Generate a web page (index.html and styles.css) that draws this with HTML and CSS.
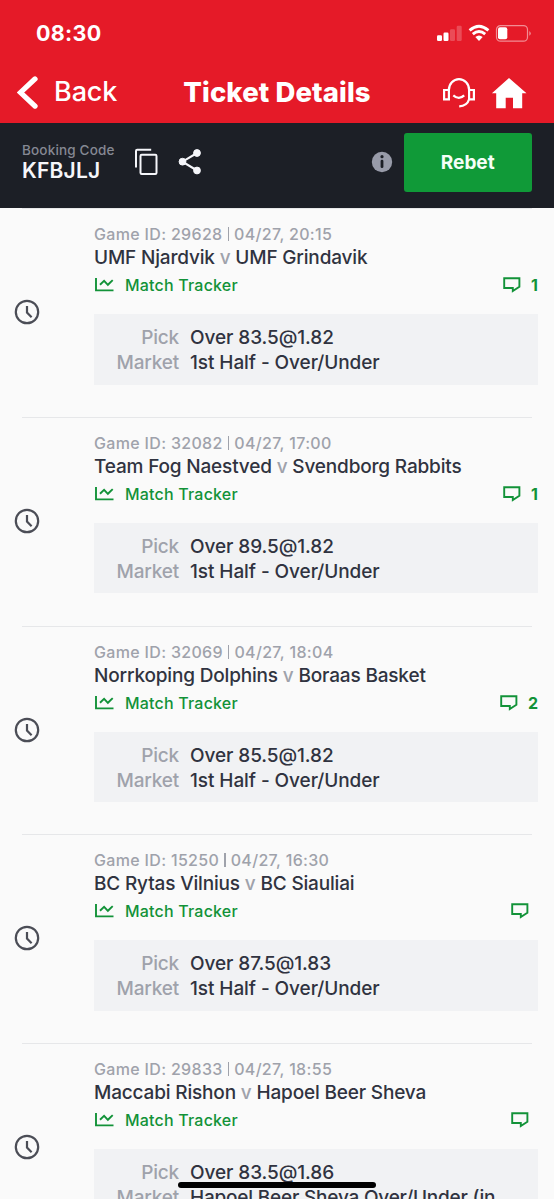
FILE: index.html
```
<!DOCTYPE html>
<html lang="en">
<head>
<meta charset="utf-8">
<title>Ticket Details</title>
<link rel="stylesheet" href="styles.css">
</head>
<body>
<svg class="defs" width="0" height="0">
  <symbol id="clock" viewBox="0 0 26 26"><circle cx="13" cy="13" r="11.2"/><path d="M13 7v6.6l4.6 4.6"/></symbol>
  <symbol id="chart" viewBox="0 0 20 16"><path d="M2 1v12.4h17.5M6 7.7l4.1-3.9 3.8 4 4.8-4.7"/></symbol>
  <symbol id="chat" viewBox="0 0 18 16" preserveAspectRatio="none"><path d="M1.2 1.2h15.2v8.6l-6.6 4.3v-3.1H1.2z"/></symbol>
</svg>
<div class="phone">
  <header class="top">
    <div class="status">
      <span class="time">08:30</span>
      <svg class="system" width="96" height="20" viewBox="0 0 96 20">
        <g fill="#fff"><rect x="1" y="12.2" width="5" height="5.8" rx="1.2"/><rect x="7.5" y="9.5" width="5" height="8.5" rx="1.2"/><g opacity=".22"><rect x="14" y="6.2" width="5" height="11.8" rx="1.2"/><rect x="20.7" y="2.8" width="5" height="15.2" rx="1.2"/></g></g>
        <path d="M33.6 7.4q9.4-8.2 18.8 0M36.8 11.2q6.2-5.2 12.4 0" fill="none" stroke="#fff" stroke-width="2.9"/>
        <path d="M39.3 14q3.7-3 7.4 0L43 18z" fill="#fff"/>
        <rect x="60.5" y="2.6" width="31" height="15.6" rx="4" fill="none" stroke="#fff" stroke-opacity=".5" stroke-width="1.2"/>
        <rect x="62" y="4.3" width="9.3" height="12" rx="2" fill="#fff"/><path d="M93.3 8v4.8q3-2.4 0-4.8" fill="#fff" opacity=".5"/>
      </svg>
    </div>
    <nav class="nav">
      <div class="back">
        <svg width="22" height="36" viewBox="0 0 22 36"><path d="M18 3.5L3.5 17.5 18 31.5" fill="none" stroke="#fff" stroke-width="5.3" stroke-linecap="round" stroke-linejoin="miter"/></svg>
        <span>Back</span>
      </div>
      <h1>Ticket Details</h1>
      <div class="actions">
        <svg width="34" height="32" viewBox="0 0 34 32" fill="none" stroke="#fff" stroke-width="2.2"><path d="M2.1 13h4.8v9.3H2.1zM27.1 13h4.8v9.3h-4.8zM6.9 13a10.1 10.8 0 0 1 20.2 0v9.3q-2 6.8-9.9 7.1M11.3 18.4Q17 23.4 22.2 18.4"/></svg>
        <svg width="36" height="32" viewBox="0 0 36 32" fill="#fff"><path d="M18 .9L35.5 16.2h-4.3v15H22V20.7h-7.3v10.5H5.2v-15H.9z"/></svg>
      </div>
    </nav>
  </header>
  <section class="booking">
    <div class="code"><span class="code-label">Booking Code</span><strong>KFBJLJ</strong></div>
    <svg class="copy" width="24" height="28" viewBox="0 0 24 28" fill="none" stroke="#f5f6fa" stroke-width="2"><path d="M2 19.5V3q0-1.2 1.2-1.2h14"/><rect x="6.5" y="6.7" width="16" height="19.2" rx="1.2"/></svg>
    <svg class="share" width="24" height="28" viewBox="0 0 24 28" fill="#f5f6fa" stroke="#f5f6fa"><path d="M19 5L4.5 13.7 19 22.5" fill="none" stroke-width="2.1"/><circle cx="19" cy="5" r="3.4"/><circle cx="4.5" cy="13.7" r="3.4"/><circle cx="19" cy="22.5" r="3.4"/></svg>
    <svg class="info" width="22" height="22" viewBox="0 0 22 22"><circle cx="11" cy="11" r="10.2" fill="#989ba9"/><circle cx="11" cy="5.7" r="1.6" fill="#1c1f26"/><rect x="9.6" y="8.8" width="2.8" height="8.3" rx="1.3" fill="#1c1f26"/></svg>
    <button class="rebet">Rebet</button>
  </section>
  <main class="games">
    <article class="game">
      <svg class="clock"><use href="#clock"/></svg>
      <div class="detail">
        <p class="meta"><span>Game ID: 29628</span><i></i><span>04/27, 20:15</span></p>
        <h2>UMF Njardvik <em>v</em> UMF Grindavik</h2>
        <div class="tracker"><svg class="chart"><use href="#chart"/></svg><span>Match Tracker</span><div class="comments"><svg class="chat"><use href="#chat"/></svg><b>1</b></div></div>
        <dl class="bet"><dt>Pick</dt><dd>Over 83.5@1.82</dd><dt>Market</dt><dd>1st Half - Over/Under</dd></dl>
      </div>
    </article>
    <article class="game">
      <svg class="clock"><use href="#clock"/></svg>
      <div class="detail">
        <p class="meta"><span>Game ID: 32082</span><i></i><span>04/27, 17:00</span></p>
        <h2>Team Fog Naestved <em>v</em> Svendborg Rabbits</h2>
        <div class="tracker"><svg class="chart"><use href="#chart"/></svg><span>Match Tracker</span><div class="comments"><svg class="chat"><use href="#chat"/></svg><b>1</b></div></div>
        <dl class="bet"><dt>Pick</dt><dd>Over 89.5@1.82</dd><dt>Market</dt><dd>1st Half - Over/Under</dd></dl>
      </div>
    </article>
    <article class="game">
      <svg class="clock"><use href="#clock"/></svg>
      <div class="detail">
        <p class="meta"><span>Game ID: 32069</span><i></i><span>04/27, 18:04</span></p>
        <h2>Norrkoping Dolphins <em>v</em> Boraas Basket</h2>
        <div class="tracker"><svg class="chart"><use href="#chart"/></svg><span>Match Tracker</span><div class="comments"><svg class="chat"><use href="#chat"/></svg><b>2</b></div></div>
        <dl class="bet"><dt>Pick</dt><dd>Over 85.5@1.82</dd><dt>Market</dt><dd>1st Half - Over/Under</dd></dl>
      </div>
    </article>
    <article class="game">
      <svg class="clock"><use href="#clock"/></svg>
      <div class="detail">
        <p class="meta"><span>Game ID: 15250</span><i></i><span>04/27, 16:30</span></p>
        <h2>BC Rytas Vilnius <em>v</em> BC Siauliai</h2>
        <div class="tracker"><svg class="chart"><use href="#chart"/></svg><span>Match Tracker</span><div class="comments empty"><svg class="chat"><use href="#chat"/></svg></div></div>
        <dl class="bet"><dt>Pick</dt><dd>Over 87.5@1.83</dd><dt>Market</dt><dd>1st Half - Over/Under</dd></dl>
      </div>
    </article>
    <article class="game">
      <svg class="clock"><use href="#clock"/></svg>
      <div class="detail">
        <p class="meta"><span>Game ID: 29833</span><i></i><span>04/27, 18:55</span></p>
        <h2>Maccabi Rishon <em>v</em> Hapoel Beer Sheva</h2>
        <div class="tracker"><svg class="chart"><use href="#chart"/></svg><span>Match Tracker</span><div class="comments empty"><svg class="chat"><use href="#chat"/></svg></div></div>
        <dl class="bet"><dt>Pick</dt><dd>Over 83.5@1.86</dd><dt>Market</dt><dd class="long">Hapoel Beer Sheva Over/Under (in</dd></dl>
      </div>
    </article>
  </main>
  <div class="home-bar"></div>
</div>
</body>
</html>
```
FILE: styles.css
```
* { box-sizing: border-box; margin: 0; padding: 0; }
body { font-family: Inter, "Liberation Sans", sans-serif; background: #fafafa; overflow: hidden; }
svg { display: block; flex: none; }
.defs { position: absolute; }
.phone { position: relative; width: 554px; height: 1199px; overflow: hidden; display: flex; flex-direction: column; }
.top { height: 123px; flex: none; background: #e51a28; color: #fff; }
.status { height: 62px; padding: 22px 22px 0 36px; display: flex; justify-content: space-between; }
.time { font-size: 21.5px; line-height: 22px; font-weight: 700; letter-spacing: .3px; }
.system { margin-top: 1px; }
.nav { height: 61px; display: grid; grid-template-columns: 167px 220px 167px; align-items: center; }
.back { display: flex; align-items: center; gap: 15px; padding-left: 17px; font-size: 27px; line-height: 32px; font-weight: 500; letter-spacing: -.1px; }
.back span { padding-bottom: 1px; }
.back svg { transform: scaleY(.97); }
h1 { font-size: 27.5px; line-height: 32px; font-weight: 780; letter-spacing: .1px; text-align: center; white-space: nowrap; padding-bottom: 1px; }
.actions { display: flex; justify-content: flex-end; gap: 15px; padding-right: 27px; }
.booking { height: 85px; flex: none; background: #1c1f26; color: #f5f6fa; display: flex; align-items: center; padding: 0 22px 7px 22px; }
.code { width: 112px; display: flex; flex-direction: column; white-space: nowrap; }
.code-label { color: #858893; font-size: 13.5px; line-height: 17px; font-weight: 500; letter-spacing: .17px; }
.code strong { font-size: 21px; line-height: 24px; font-weight: 600; letter-spacing: .2px; }
.share { margin-left: 20px; }
.info { margin-left: auto; }
.rebet { margin-left: 10.5px; width: 128.5px; height: 59px; border: 0; border-radius: 3px; background: #109a38; color: #f5fff7; font: 650 19px Inter, sans-serif; }
.games { flex: none; }
.game { position: relative; height: 208.75px; padding-right: 16px; display: flex; }
.game::before { content: ""; position: absolute; left: 22px; right: 22px; top: 0; height: 1px; background: #e6e7e9; }
.clock { width: 26px; height: 26px; margin: 91px 54px 0 14px; fill: none; stroke: #4b4d56; stroke-width: 2.2; }
.detail { width: 444px; padding-top: 15px; }
.meta { display: flex; align-items: center; height: 22px; color: #9fa2ab; font-size: 16px; font-weight: 550; letter-spacing: .33px; white-space: nowrap; }
.meta i { width: 1.5px; height: 14px; background: #9fa2ab; margin: 0 5px; }
h2 { height: 26px; line-height: 25px; color: #303340; font-size: 19px; font-weight: 550; letter-spacing: -.17px; white-space: nowrap; }
h2 em { font-style: normal; color: #9fa2ab; }
.tracker { height: 28px; display: flex; align-items: center; color: #129238; font-size: 16px; font-weight: 550; letter-spacing: .2px; }
.chart { width: 20px; height: 16px; margin-right: 11px; fill: none; stroke: #129238; stroke-width: 1.9; }
.comments { margin-left: auto; display: flex; align-items: center; }
.comments.empty { margin-right: 9px; }
.chat { width: 18px; height: 16px; fill: none; stroke: #129238; stroke-width: 1.9; }
.comments b { font-weight: 650; font-size: 16px; letter-spacing: 0; margin-left: 10px; }
.bet { margin-top: 15px; height: 70.5px; background: #f1f2f4; padding-top: 11px; display: grid; grid-template-columns: 85px 1fr; grid-auto-rows: 25px; column-gap: 11px; align-content: start; font-size: 19px; line-height: 25px; font-weight: 550; letter-spacing: -.08px; white-space: nowrap; }
.bet dt { text-align: right; color: #9fa2ab; font-weight: 500; letter-spacing: -.2px; }
.bet dd { color: #303340; }
.bet dd.long { letter-spacing: -.2px; }
.home-bar { position: absolute; left: 178px; top: 1182px; width: 198px; height: 6px; border-radius: 3px; background: #000; }
```
